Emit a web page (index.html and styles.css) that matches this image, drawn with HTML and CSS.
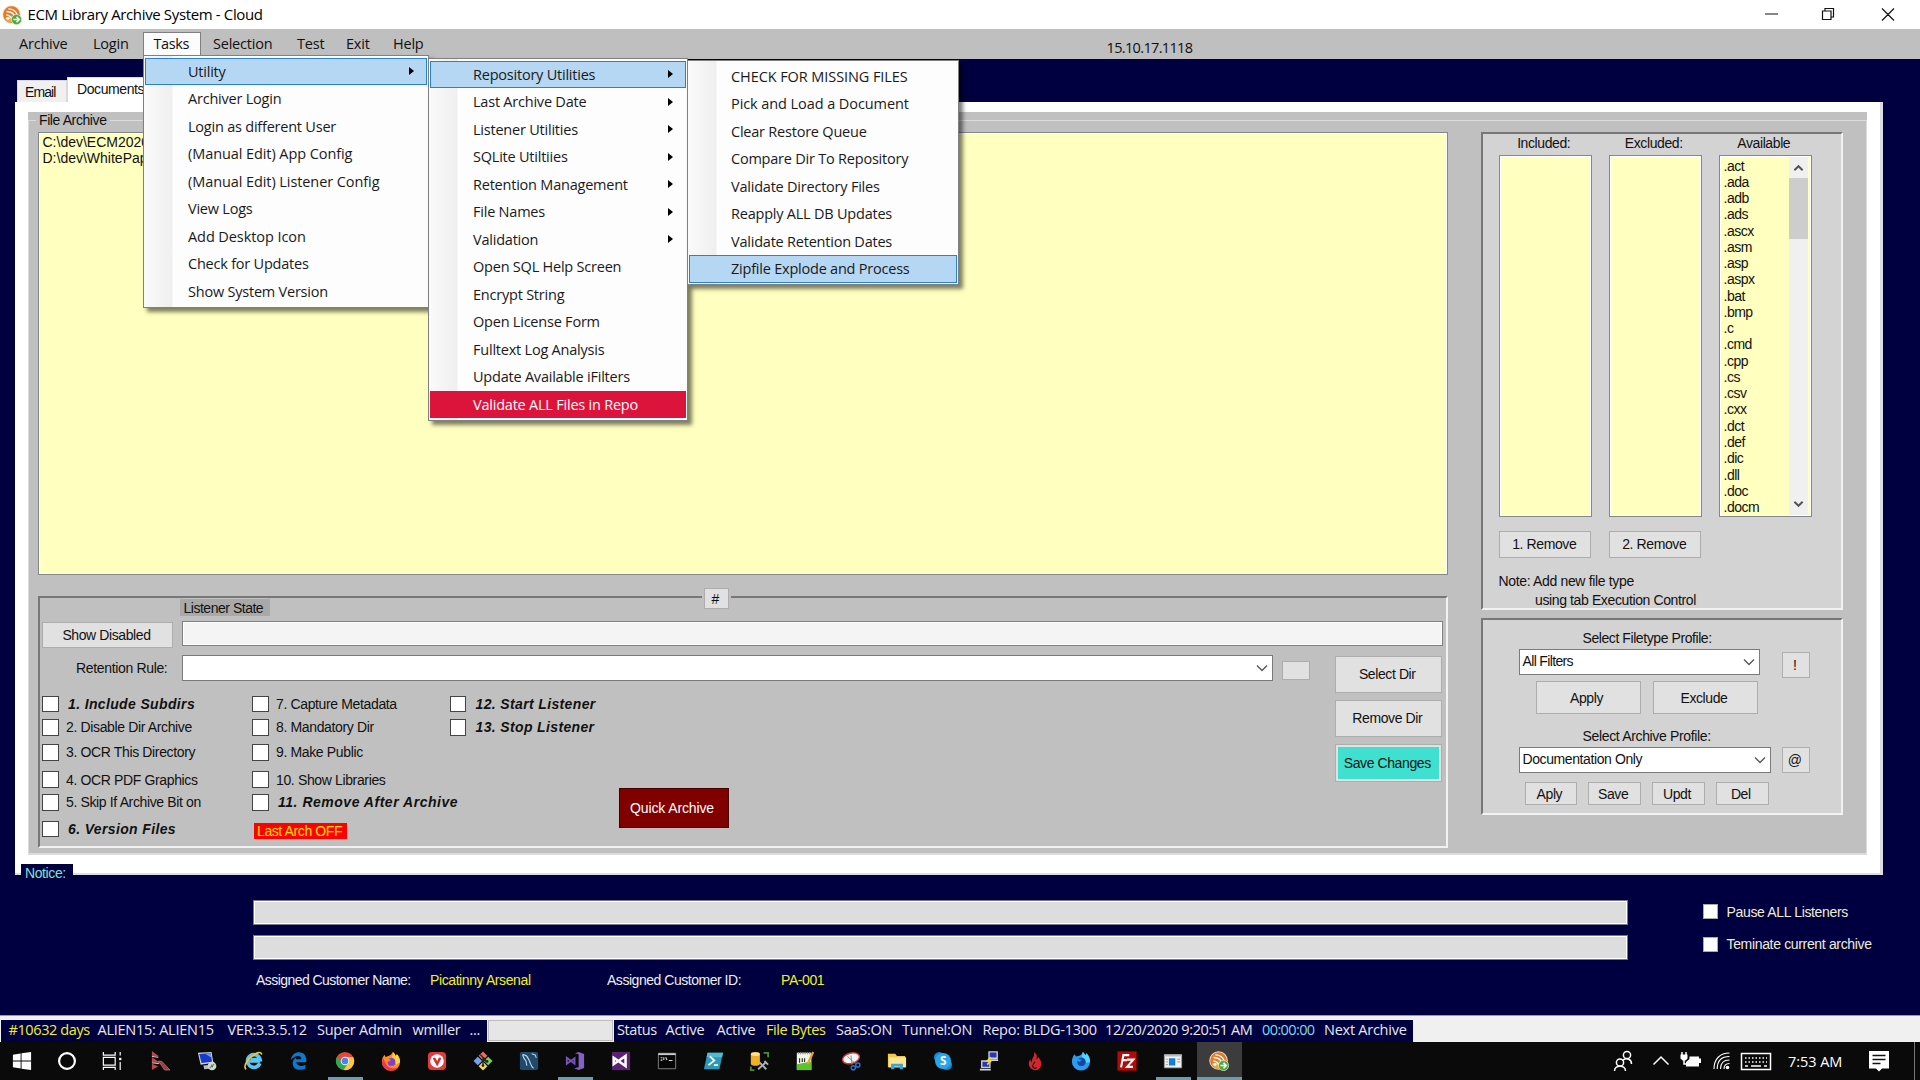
FILE: index.html
```html
<!DOCTYPE html>
<html lang="en">
<head>
<meta charset="utf-8">
<title>ECM Library Archive System - Cloud</title>
<link rel="stylesheet" href="styles.css">
</head>
<body>
<svg class="defs" width="0" height="0">
  <symbol id="ecm" viewBox="0 0 22 22">
    <circle cx="10.5" cy="10.5" r="10.2" fill="#f2ddc4"/><circle cx="10.5" cy="10.5" r="9.2" fill="#e07a2c"/>
    <path d="M3 14a8.600 8.600 0 0 0 8 5.700L13 11z" fill="#e8a83c"/>
    <path d="M5 7.200c5 0 9 3 10 8M4.600 10.800c3 .2 5.500 2 6.300 5M7 4.200c4.500 0 8.500 3 10 7" fill="none" stroke="#fff" stroke-width="1.500"/>
    <circle cx="6.500" cy="14.500" r="1.700" fill="#fff"/>
    <circle cx="16" cy="16" r="5.600" fill="#4ea83f" stroke="#d8efcf" stroke-width=".8"/>
    <path d="M12.500 16h6M16 13l3 3-3 3" fill="none" stroke="#fff" stroke-width="1.800"/>
  </symbol>
  <symbol id="down" viewBox="0 0 12 8"><path d="M1 1.500l5 5 5-5" fill="none" stroke="#555" stroke-width="1.300"/></symbol>
</svg>

<header class="titlebar">
  <svg class="app-icon"><use href="#ecm"/></svg>
  <span class="title">ECM Library Archive System - Cloud</span>
  <svg class="win-controls" viewBox="0 0 180 29">
    <g fill="none" stroke="#111" stroke-width="1.200">
      <path d="M25 14h13M82.500 11h8.500v8.500h-8.500zM85 11V8.500h8.500V17H91M142 8.500l12 12M154 8.500l-12 12"/>
    </g>
  </svg>
</header>

<nav class="menubar">
  <span class="mi" style="width:74px">Archive</span>
  <span class="mi" style="width:61px">Login</span>
  <span class="mi open" style="width:58px">Tasks</span>
  <span class="mi" style="width:84px">Selection</span>
  <span class="mi" style="width:49px">Test</span>
  <span class="mi" style="width:47px">Exit</span>
  <span class="mi" style="width:54px">Help</span>
  <span class="version">15.10.17.1118</span>
</nav>

<main class="client">
  <div class="tabs"><span class="tab">Email</span><span class="tab selected">Documents</span></div>
  <section class="page">
    <div class="page-body">
      <fieldset class="group">
        <legend>File Archive</legend>
        <div class="columns">
          <div class="col-left">
            <div class="listbox archive-list"><div>C:\dev\ECM2020</div><div>D:\dev\WhitePapers</div></div>
            <section class="panel settings">
              <button class="btn hash">#</button>
              <span class="state-label">Listener State</span>
              <div class="row-state"><button class="btn show">Show Disabled</button><div class="textbox"></div></div>
              <div class="lower">
                <div class="lower-main">
                  <div class="row-rule">
                    <span class="rule-label">Retention Rule:</span>
                    <div class="combo rule"><svg class="chev"><use href="#down"/></svg></div>
                    <button class="btn tiny"></button>
                  </div>
                  <div class="checks">
                    <label class="check c1 bi"><i></i>1. Include Subdirs</label>
                    <label class="check c2"><i></i>7. Capture Metadata</label>
                    <label class="check c3 bi"><i></i>12. Start Listener</label>
                    <label class="check c1"><i></i>2. Disable Dir Archive</label>
                    <label class="check c2"><i></i>8. Mandatory Dir</label>
                    <label class="check c3 bi"><i></i>13. Stop Listener</label>
                    <label class="check c1"><i></i>3. OCR This Directory</label>
                    <label class="check c2"><i></i>9. Make Public</label>
                    <label class="check c1"><i></i>4. OCR PDF Graphics</label>
                    <label class="check c2"><i></i>10. Show Libraries</label>
                    <label class="check c1"><i></i>5. Skip If Archive Bit on</label>
                    <label class="check c2 bi wide"><i></i>11. Remove After Archive</label>
                    <label class="check c1 bi last"><i></i>6. Version Files</label>
                    <span class="arch-off">Last Arch OFF</span>
                    <button class="quick">Quick Archive</button>
                  </div>
                </div>
                <div class="dir-buttons">
                  <button class="btn">Select Dir</button>
                  <button class="btn">Remove Dir</button>
                  <button class="btn save">Save Changes</button>
                </div>
              </div>
            </section>
          </div>
          <div class="col-right">
            <section class="panel light types">
              <div class="type-grid">
                <span class="head">Included:</span><span class="head">Excluded:</span><span class="head">Available</span>
                <div class="listbox"></div>
                <div class="listbox"></div>
                <div class="listbox ext">
                  <div class="ext-items"><div>.act</div><div>.ada</div><div>.adb</div><div>.ads</div><div>.ascx</div><div>.asm</div><div>.asp</div><div>.aspx</div><div>.bat</div><div>.bmp</div><div>.c</div><div>.cmd</div><div>.cpp</div><div>.cs</div><div>.csv</div><div>.cxx</div><div>.dct</div><div>.def</div><div>.dic</div><div>.dll</div><div>.doc</div><div>.docm</div></div>
                  <div class="scroll">
                    <svg viewBox="0 0 12 8"><path d="M1.500 6.500l4.500-4.500 4.500 4.500" fill="none" stroke="#555" stroke-width="2.200"/></svg>
                    <div class="thumb"></div>
                    <svg viewBox="0 0 12 8"><path d="M1.500 1.500l4.500 4.500 4.500-4.500" fill="none" stroke="#555" stroke-width="2.200"/></svg>
                  </div>
                </div>
                <button class="btn rem">1. Remove</button><button class="btn rem">2. Remove</button>
              </div>
              <div class="note">Note: Add new file type</div>
              <div class="note second">using tab Execution Control</div>
            </section>
            <section class="panel light profiles">
              <div class="plabel">Select Filetype Profile:</div>
              <div class="prow"><div class="combo ft">All Filters<svg class="chev"><use href="#down"/></svg></div><button class="btn sq low">!</button></div>
              <div class="apply-row"><button class="btn">Apply</button><button class="btn">Exclude</button></div>
              <div class="plabel second">Select Archive Profile:</div>
              <div class="prow"><div class="combo ap">Documentation Only<svg class="chev"><use href="#down"/></svg></div><button class="btn sq">@</button></div>
              <div class="small-row"><button class="btn">Aply</button><button class="btn">Save</button><button class="btn">Updt</button><button class="btn">Del</button></div>
            </section>
          </div>
        </div>
      </fieldset>
    </div>
  </section>
  <div class="notice">Notice:</div>
  <section class="bottom">
    <div class="bars">
      <div class="bar"></div><div class="bar"></div>
      <div class="customer"><span class="cn">Assigned Customer Name:</span><span class="y cv">Picatinny Arsenal</span><span class="ci">Assigned Customer ID:</span><span class="y">PA-001</span></div>
    </div>
    <div class="flags">
      <label class="flag"><i></i>Pause ALL Listeners</label>
      <label class="flag"><i></i>Teminate current archive</label>
    </div>
  </section>
</main>

<div class="statusbar">
  <div class="st left"><span class="y" style="width:89px">#10632 days</span><span style="width:130px">ALIEN15: ALIEN15</span><span style="width:89.500px">VER:3.3.5.12</span><span style="width:95.500px">Super Admin</span><span style="width:57px">wmiller</span><span>...</span></div>
  <div class="st-progress"></div>
  <div class="st right"><span class="tight" style="width:48.500px">Status</span><span style="width:51px">Active</span><span style="width:49.500px">Active</span><span class="y" style="width:70px">File Bytes</span><span style="width:66px">SaaS:ON</span><span style="width:80.500px">Tunnel:ON</span><span style="width:122.500px">Repo: BLDG-1300</span><span class="tight" style="width:157px">12/20/2020 9:20:51 AM</span><span class="aqua" style="width:62px">00:00:00</span><span>Next Archive</span></div>
</div>

<footer class="taskbar">
  <div class="sys"><svg viewBox="0 0 22 22"><path d="M1 4l8.500-1.200v7.700H1zM10.500 2.600L21 1v9.500H10.500zM1 11.500h8.500v7.700L1 18zM10.500 11.500H21V21l-10.500-1.600z" fill="#fff"/></svg></div>
  <div class="sys"><svg viewBox="0 0 22 22"><circle cx="11" cy="11" r="8.700" fill="none" stroke="#fff" stroke-width="2.400"/></svg></div>
  <div class="sys"><svg viewBox="0 0 22 22"><path d="M1.500 1v3.500h13V1M1.500 7h13v8.500h-13zM1.500 21v-3h13v3M20 1v4M20 12v9" fill="none" stroke="#fff" stroke-width="1.300"/><path d="M18.800 7.500h2.500v2.600h-2.500z" fill="#fff"/></svg></div>
  <div class="apps">
    <div class="app"><svg viewBox="0 0 22 22"><path d="M1 0l8 6H1zM1 7l9 6H1zM1 14l7 3-7 4z" fill="#b9474b"/><path d="M8 11l4 .5 9 9.500h-6z" fill="#a33b40" stroke="#c9a0a0" stroke-width=".6"/><path d="M1 6l7 1M1 13l8 1" stroke="#ddd"/></svg></div>
    <div class="app"><svg viewBox="0 0 22 22"><path d="M1 2l15-1 2 12-14 2z" fill="#cfd6dc"/><path d="M2.500 3.200l12.500-.9 1.600 9.500-11.600 1.500z" fill="#1838c8"/><path d="M9 3l6-.5.9 5z" fill="#6c9bf0"/><path d="M7 16l9-1 1 4-9 1z" fill="#b8bfc5"/><circle cx="16.500" cy="16.500" r="4.800" fill="#d3d8d4"/><path d="M14 18.500l2-1.500 0-2M19 14.500l-2 1.500v2" fill="none" stroke="#4b8b3b" stroke-width="1.200"/></svg></div>
    <div class="app"><svg viewBox="0 0 22 22"><path d="M18.500 13.500a7 7 0 1 1 .3-4H8" fill="none" stroke="#5cc3f2" stroke-width="4"/><path d="M5 11.500h14" stroke="#5cc3f2" stroke-width="3"/><path d="M3.500 20C0 18 4 10 10 5.500S20 .5 20.500 4" fill="none" stroke="#f0c437" stroke-width="1.800"/></svg></div>
    <div class="app"><svg viewBox="0 0 22 22"><path d="M2 10C3 4 7 1.500 11 1.500c5.500 0 8 4 8 8.500v2.500H8c.3 4 5.500 5 10 2.500v4.200c-6 3.300-14 1.300-14-5.700 0-3.500 2-5.700 4.200-6.700-.5 1-.6 1.700-.6 2.200h6C13.500 4 6.500 4.500 2 10z" fill="#0b79d0"/></svg></div>
    <div class="app run"><svg viewBox="0 0 22 22"><circle cx="11" cy="11" r="10" fill="#e8473b"/><path d="M2.300 6A10 10 0 0 0 9.500 20.900l4.500-7.600-6.500-.5z" fill="#2da94f"/><path d="M11 6.500h9A10 10 0 0 1 9.500 20.900L14.800 13z" fill="#fcc934"/><circle cx="11" cy="11" r="4.700" fill="#fff"/><circle cx="11" cy="11" r="3.700" fill="#4285f4"/></svg></div>
    <div class="app"><svg viewBox="0 0 22 22"><path d="M13 1c2 1.500 2.500 3 3 4.500l1.500-2C20 6 21 9 21 12a10 9.700 0 0 1-20 0c0-4 1.500-6.500 3-8l1 2.500C8 5.500 11 5 13 1z" fill="#ff8a26"/><path d="M13 1c2 1.500 2.500 3 3 4.500l1.500-2C20 6 21 9 21 12l-4 3-5-9c1-1.500 1.500-3.500 1-5z" fill="#ffd43a"/><path d="M1 12a10 9.700 0 0 0 18 5.500C14 21 5 19 3 8z" fill="#f5334f"/><circle cx="11.500" cy="12" r="4.300" fill="#7b3fd4"/><path d="M5 8l6 1.500-2 2H6z" fill="#ff8a26"/></svg></div>
    <div class="app"><svg viewBox="0 0 22 22"><rect x="1" y="1" width="20" height="20" rx="4.500" fill="#e33b3b"/><circle cx="11" cy="11" r="7.500" fill="#fff"/><path d="M8 8.500l3.200 5.500L14 8.500" fill="none" stroke="#d8302f" stroke-width="2.800" stroke-linecap="round"/></svg></div>
    <div class="app"><svg viewBox="0 0 22 22"><path d="M11 .5l4.800 4.800-4.800 4.800-4.800-4.800z" fill="#ec6b5e"/><path d="M5.300 6.200l4.800 4.800-4.800 4.800L.5 11z" fill="#6fa3ea"/><path d="M16.700 6.200l4.800 4.800-4.800 4.800-4.800-4.800z" fill="#7fd05b"/><path d="M11 11.900l4.800 4.800-4.800 4.800-4.800-4.800z" fill="#f3d862"/><path d="M8 4l6 6M11 7v9M11 8l4 4" stroke="#222" stroke-width="1.500"/><circle cx="11" cy="16" r="1.500" fill="#222"/><circle cx="15.500" cy="11.500" r="1.500" fill="#222"/></svg></div>
    <div class="app"><svg viewBox="0 0 22 22"><rect x="1" y="1" width="20" height="20" rx="2" fill="#1f4a6b"/><path d="M4 4c4 0 5 2 7 6s2 7 5 9M4 4c1 3 1 4 3 6s0 4 2 6M14 3l4 1.500 1 3" fill="none" stroke="#c9dbe8" stroke-width="1.200"/></svg></div>
    <div class="app run"><svg viewBox="0 0 22 22"><path d="M15 1l6 2.300v15.400L15 21l-5-2 5-1V3.500l-4-1z" fill="#8661c5"/><path d="M2 7.500L10.500 14V8L2 14z" fill="none" stroke="#7b53bd" stroke-width="2"/></svg></div>
    <div class="app"><svg viewBox="0 0 22 22"><path d="M1 1h20v20H1z" fill="#5c2171"/><path d="M3 7.500L16 16.500V5.500L3 14.500z" fill="none" stroke="#fff" stroke-width="2.800"/></svg></div>
    <div class="app"><svg viewBox="0 0 22 22"><path d="M1.500 2.500h19v17h-19z" fill="#050505" stroke="#888"/><path d="M1.500 3.500h19" stroke="#ccc" stroke-width="2"/><path d="M4 7.500h2M4 10h2M7.500 7v3M9.500 7l1.500 3M13 10.500h4" stroke="#ddd" stroke-width="1.200"/></svg></div>
    <div class="app"><svg viewBox="0 0 22 22"><path d="M5 2h17l-4 18H1z" fill="#2b9ab8"/><path d="M5 2h17l-1 5H4z" fill="#54bad2"/><path d="M7.500 6l5 4.500-6.500 5M12 15.500h4.500" fill="none" stroke="#fff" stroke-width="1.900"/></svg></div>
    <div class="app"><svg viewBox="0 0 22 22"><path d="M2 3v11c0 3 10 3 10 0V3z" fill="#f0b01f"/><ellipse cx="7" cy="3.200" rx="5" ry="2.200" fill="#ffe08a"/><path d="M16 2h5v5M2 17v4h4" fill="none" stroke="#4a8a3f" stroke-width="2"/><path d="M10 20l8-7M11 12l8 8" stroke="#aab0b3" stroke-width="2.200"/><path d="M17 11l4 4" stroke="#aab0b3" stroke-width="2"/></svg></div>
    <div class="app"><svg viewBox="0 0 22 22"><path d="M2 2h16v19H2z" fill="#f1f5e8"/><path d="M2 14.500l16-3V21H2z" fill="#5fc12e"/><path d="M3 2.500h14" stroke="#999" stroke-width="2" stroke-dasharray="1.500 1"/><path d="M5 13V8M8 8v4M10.500 8v4" stroke="#333" fill="none" stroke-width="1.300"/><path d="M20 1l-6 13" stroke="#e5a52a" stroke-width="2.500"/></svg></div>
    <div class="app"><svg viewBox="0 0 22 22"><ellipse cx="11" cy="8" rx="9.500" ry="5.800" transform="rotate(-15 11 8)" fill="#f4f4f4" stroke="#c43a3a" stroke-width="1.600"/><path d="M7 6l9 8M11 5l1 10" stroke="#888"/><circle cx="18.500" cy="15.500" r="2.300" fill="none" stroke="#2c6fd1" stroke-width="1.600"/><circle cx="13.500" cy="18.500" r="2.300" fill="none" stroke="#2c6fd1" stroke-width="1.600"/></svg></div>
    <div class="app"><svg viewBox="0 0 22 22"><path d="M1 3h8l2 2.500h9V18H1z" fill="#f3c64c"/><path d="M2 7h19v11H2z" fill="#ffe594"/><path d="M4.500 20v-6h13v6h-3.500v-3H8v3z" fill="#37a6dc"/></svg></div>
    <div class="app"><svg viewBox="0 0 22 22"><circle cx="7" cy="7" r="6" fill="#1785cf"/><circle cx="15" cy="15" r="6" fill="#1785cf"/><circle cx="11" cy="11" r="8.800" fill="#2aa5ea"/><text x="11" y="15.800" class="skype">S</text></svg></div>
    <div class="app"><svg viewBox="0 0 22 22"><path d="M11 1h9v7h-9zM3 11h9v7H3z" fill="#2a35b8" stroke="#cfd0d6" stroke-width="1.500"/><path d="M10 10h11M1 20.500h12" stroke="#d6d6d6" stroke-width="2"/><path d="M13 7l-4 4h4l-4 4" fill="none" stroke="#f5e11b" stroke-width="1.700"/></svg></div>
    <div class="app"><svg viewBox="0 0 22 22"><path d="M10 1c5 4 2 6 3 8 1.500-1 1-2 1-3 5 5 5 11 1 14-2 1.500-5 1.500-7 0C3 17 3.500 12 6 9c0 2 .5 3 1.500 3.500C7 8 11 6 10 1z" fill="#d3262c"/><path d="M11 12c-3 3-3 4-2 6 1 1 3 1 4 0" fill="none" stroke="#111" stroke-width="1.300"/></svg></div>
    <div class="app"><svg viewBox="0 0 22 22"><path d="M13 1c1.500 1 2.200 2.500 2.700 4L17 2.500C20 5 21 9 21 12a10 9.500 0 0 1-20 0c0-4 1.500-7 3-8.500L5.500 6C9 5.500 12 4.500 13 1z" fill="#2b9cf0"/><path d="M13 1c1.500 1 2.200 2.500 2.700 4L17 2.500C20 5 21 9 21 12l-4 1-5-7z" fill="#52d5fb"/><circle cx="11.500" cy="12" r="4.500" fill="#18469c"/><path d="M4 8l8 1.500-3 2.500z" fill="#2b9cf0"/></svg></div>
    <div class="app"><svg viewBox="0 0 22 22"><path d="M.5 .5h21v21H.5z" fill="#b30a0a" stroke="#7c0505" stroke-dasharray="1.500 1"/><path d="M4.500 18L7 4.500h6.500M6 10h5M11 9.500h7l-7 8h6.500" fill="none" stroke="#fff" stroke-width="2.300"/></svg></div>
    <div class="app run"><svg viewBox="0 0 22 22"><path d="M1.500 4h19v14.500h-19z" fill="#f2f2f2" stroke="#9a9a9a"/><path d="M1.500 5h19" stroke="#bbb" stroke-width="2"/><path d="M6.500 8h7v8h-7z" fill="#1280d8"/><path d="M3 9h2.500M3 12h2.500M3 15h2.500M15.500 9H19M15.500 12H19" stroke="#999"/></svg></div>
    <div class="app active"><svg><use href="#ecm"/></svg></div>
  </div>
  <svg class="tray" viewBox="0 0 310 38" width="310" height="38">
    <g fill="none" stroke="#fff" stroke-width="1.500">
      <circle cx="17" cy="13" r="3.600"/><circle cx="10" cy="20.500" r="3.600"/>
      <path d="M4.500 29c0-6.500 11-6.500 11 0M13 18c4-2.500 8.500-1 8.500 4"/>
      <path d="M43.500 22.500l7.500-7.500 7.500 7.500"/>
      <path d="M114 27c0-3.500 2-5.500 5.500-5.500M110.500 27c0-6 3.500-9 9-9M107.200 27c0-8 4.500-12.500 12.300-12.500M104 27c0-10 6-16 15.500-16" stroke-width="1.100"/>
      <rect x="131.500" y="11.500" width="29" height="16"/>
      <path d="M135 16h22M135 20h22" stroke-dasharray="1.500 2"/><path d="M135 24h3M141 24h10M154 24h3"/>
      <path d="M72 10v3M76 10v3"/><path d="M74 18v4h3"/>
    </g>
    <path d="M70.500 12.500h7v4l-2 2h-3l-2-2zM79.500 14.500h9.500v2h2v4.500h-2v3.500H76v-4.500l3.500-3z" fill="#fff"/>
    <circle cx="117.500" cy="25.500" r="1.800" fill="#fff"/>
    <path d="M259 9h20v17.500h-7l-3 3-3-3h-7z" fill="#fff"/>
    <path d="M262.500 13.500h13M262.500 17.500h13M262.500 21.500h8" stroke="#111" stroke-width="1.300"/>
    <path d="M304.500 0v38" stroke="#777"/>
    <text x="178" y="24.500" class="clock" textLength="54">7:53 AM</text>
  </svg>
</footer>

<div class="menu m1">
  <div class="item hot sub">Utility</div><div class="item">Archiver Login</div><div class="item">Login as different User</div><div class="item loose">(Manual Edit) App Config</div><div class="item loose">(Manual Edit) Listener Config</div><div class="item">View Logs</div><div class="item loose">Add Desktop Icon</div><div class="item">Check for Updates</div><div class="item">Show System Version</div>
</div>
<div class="menu m2">
  <div class="item hot sub">Repository Utilities</div><div class="item sub">Last Archive Date</div><div class="item sub">Listener Utilities</div><div class="item sub">SQLite Utiltiies</div><div class="item sub">Retention Management</div><div class="item sub">File Names</div><div class="item sub">Validation</div><div class="item">Open SQL Help Screen</div><div class="item">Encrypt String</div><div class="item">Open License Form</div><div class="item">Fulltext Log Analysis</div><div class="item">Update Available iFilters</div><div class="item danger">Validate ALL Files in Repo</div>
</div>
<div class="menu m3">
  <div class="item loose">CHECK FOR MISSING FILES</div><div class="item loose">Pick and Load a Document</div><div class="item">Clear Restore Queue</div><div class="item">Compare Dir To Repository</div><div class="item">Validate Directory Files</div><div class="item">Reapply ALL DB Updates</div><div class="item">Validate Retention Dates</div><div class="item hot">Zipfile Explode and Process</div>
</div>
</body>
</html>
```
FILE: styles.css
```css
* { box-sizing: border-box; }
body {
  margin: 0; width: 1920px; height: 1080px; overflow: hidden; position: relative;
  display: flex; flex-direction: column; background: #000040; color: #111;
  font: 14px/16px "Liberation Sans", Arial, sans-serif; letter-spacing: -0.4px; white-space: nowrap;
}
.defs { position: absolute; }
button { font: inherit; letter-spacing: inherit; color: inherit; padding: 0; margin: 0; }

/* title bar and menu bar */
.titlebar, .menubar, .menu, .st { font-family: "Open Sans", sans-serif; font-size: 14.5px; letter-spacing: -0.22px; }
.titlebar { height: 29px; background: #fff; display: flex; align-items: center; color: #000; flex: none; }
.app-icon { width: 20px; height: 20px; margin-left: 2px; }
.title { margin-left: 5.500px; font-size: 15px; letter-spacing: -0.36px; padding-bottom: 2px; }
.win-controls { width: 180px; height: 29px; margin-left: auto; }
.menubar { height: 30px; background: #bfbfbf; display: flex; align-items: flex-end; padding: 0 0 3px 8px; flex: none; }
.mi { height: 24px; line-height: 23px; padding-left: 11px; }
.mi.open { background: #fcfcfc; border: 1px solid #808080; border-bottom: 0; padding-left: 9.500px; margin-right: 1px; letter-spacing: -0.4px; line-height: 22px; }
.version { margin-left: 670.500px; line-height: 16px; letter-spacing: -0.65px; }

/* tabbed page */
.client { flex: none; height: 956px; }
.tabs { padding: 18px 0 0 17px; display: flex; align-items: flex-end; height: 43px; }
.tab { background: #f0f0f0; width: 50px; height: 22px; padding: 3px 0 0 7px; letter-spacing: -0.9px; border: 1px solid #d9d9d9; border-bottom: 0; }
.tab.selected { background: #fff; width: 100px; height: 25px; padding-left: 9px; letter-spacing: -0.4px; }
.page { margin-left: 15px; width: 1868px; height: 773px; background: #fff; border-right: 3px solid #dcdce4; border-bottom: 2px solid #dcdce4; padding: 10px 0 0 13px; }
.page-body { width: 1839px; height: 743px; background: #c0c0c0; }
.group { margin: 0; padding: 4px 0 0 9px; height: 743px; border: 1px solid #dcdcdc; border-bottom-width: 2px; min-width: 0; }
legend { height: 16px; line-height: 17px; padding: 0 3px; margin-left: -2px; }
.columns { display: flex; gap: 32.500px; margin-left: -0.500px; }
.col-left { width: 1410.500px; }
.col-right { width: 362.500px; }
.listbox { background: #ffffbf; border: 1px solid #828790; outline: 1px solid #fff; outline-offset: -2px; }
.archive-list { height: 443px; padding: 1px 0 0 4px; line-height: 16.200px; letter-spacing: 0; }
.panel { border: 2px solid; border-color: #777 #f2f2f2 #f2f2f2 #777; }
.light { background: #d3d3d3; }
.btn { background: #e1e1e1; border: 1.500px solid #adadad; border-radius: 0; display: flex; align-items: center; justify-content: center; padding-right: 1.500px; }
.textbox { background: #f4f4f4; border: 1px solid #808080; box-shadow: inset 0 0 0 1px #fff; height: 25px; width: 1261px; }
.combo { background: #fff; border: 1px solid #7a7a7a; height: 26px; display: flex; align-items: center; padding: 0 4px 2px 3px; }
.chev { width: 12px; height: 8px; margin-left: auto; position: relative; top: 1px; }

/* archive settings panel */
.settings { position: relative; margin-top: 21px; height: 251.500px; }
.hash { position: absolute; left: 664px; top: -10px; width: 25px; height: 21px; box-shadow: -2px 0 #c0c0c0, 2px 0 #c0c0c0; }
.state-label { display: block; margin: 1px 0 0 140.500px; width: 90px; height: 16.500px; line-height: 18px; background: #a9a9a9; padding-left: 3.500px; letter-spacing: -0.48px; }
.row-state { display: flex; gap: 9px; margin: 5px 0 0 2px; height: 27px; }
.show { width: 131.500px; height: 26px; margin-top: 1px; }
.lower { display: flex; padding-top: 7px; }
.lower-main { width: 1295.500px; }
.row-rule { display: flex; }
.rule-label { width: 142.500px; padding: 5px 0 0 36.500px; letter-spacing: -0.34px; }
.rule { width: 1091px; }
.tiny { width: 28px; height: 19px; margin: 6px 0 0 9px; }
.checks { display: grid; grid-template-columns: 210px 197.500px 169px 120px; grid-template-rows: 23.500px 23.700px 26.200px 28.600px 16.600px 27px; margin: 11.500px 0 0 2.500px; align-items: center; }
.check { display: flex; align-items: center; height: 17px; letter-spacing: -0.36px; }
.check i { width: 16.500px; height: 16.500px; background: #fff; border: 1px solid #444; margin-right: 7.500px; flex: none; }
.check.bi { font-weight: bold; font-style: italic; letter-spacing: 0.360px; }
.check.bi i { margin-right: 9.500px; }
.check.wide { letter-spacing: 0.520px; }
.c1 { grid-column: 1; }
.c2 { grid-column: 2; }
.c3 { grid-column: 3; }
.last { align-self: end; }
.arch-off { grid-column: 2; grid-row: 6; align-self: end; margin: 0 0 -1.500px 1.500px; width: 93.500px; height: 16px; line-height: 17px; padding-left: 3.500px; background: #f00; color: #ffe100; }
.quick { grid-column: 4; grid-row: 4 / 7; align-self: start; margin: 22.500px 0 -10px; width: 110px; height: 40px; background: #800000; color: #fff; border: 1px solid #400; letter-spacing: -0.12px; padding-right: 3px; }
.dir-buttons { display: flex; flex-direction: column; gap: 7px; padding-top: 1px; }
.dir-buttons .btn { width: 107px; height: 37px; padding-right: 2.500px; }
.dir-buttons .save { background: #40e0d0; box-shadow: inset 0 0 0 2px #e1e1e1; height: 38px; }

/* file types */
.types { height: 478px; padding: 0 0 0 16px; }
.type-grid { display: grid; grid-template-columns: repeat(3, 93.500px); column-gap: 16.500px; grid-template-rows: 20.500px 362px 41px; }
.head { text-align: center; padding: 1px 3px 0 0; }
.ext { display: flex; overflow: hidden; }
.ext-items { flex: 1; padding: 2px 0 0 4px; line-height: 16.260px; letter-spacing: -0.5px; }
.scroll { width: 19px; margin: 1px 3px 1px 0; background: #f0f0f0; display: flex; flex-direction: column; align-items: center; padding: 7px 0; }
.scroll svg { width: 11px; height: 8px; flex: none; }
.scroll svg:last-child { margin-top: auto; }
.thumb { width: 19px; height: 61px; background: #cdcdcd; margin-top: 6px; }
.rem { height: 27px; align-self: end; width: 92px; margin-left: 0.500px; }
.note { margin-top: 15px; letter-spacing: -0.34px; }
.second.note { margin: 3px 0 0 36.500px; letter-spacing: -0.38px; }

/* profiles */
.profiles { margin-top: 8px; height: 197px; padding: 10px 0 0 36px; }
.plabel { padding-left: 64px; letter-spacing: -0.420px; }
.prow { display: flex; margin-top: 3px; justify-content: space-between; padding-right: 31.500px; height: 26px; }
.ft { width: 241px; letter-spacing: -0.65px; }
.ap { width: 252px; }
.sq { width: 28px; height: 26px; }
.low { margin-top: 3px; }
.apply-row { display: flex; gap: 12.500px; margin: 6px 0 0 17px; }
.apply-row .btn { width: 105px; height: 33px; padding-right: 3px; }
.plabel.second { margin-top: 13.500px; letter-spacing: -0.340px; }
.small-row { display: flex; gap: 11px; margin: 9.500px 0 0 6px; }
.small-row .btn { width: 52.800px; height: 23px; padding-right: 3px; }

/* notice, progress, flags */
.notice { margin: -11px 0 0 21px; width: 51.500px; height: 16px; line-height: 18px; padding-left: 4px; background: #000040; color: #7fe0d4; position: relative; }
.bottom { display: flex; padding: 20px 0 0 252.500px; }
.bars { width: 1375px; }
.bar { height: 25px; background: #ddd; border: 1px solid #77778c; box-shadow: inset 0 0 0 1px #fff; margin-bottom: 10px; }
.customer { display: flex; color: #eee; padding: 2px 0 0 3.500px; }
.cn { width: 174px; letter-spacing: -0.550px; }
.cv { width: 177px; }
.ci { width: 174px; letter-spacing: -0.470px; }
.y { color: #f0f020; }
.flags { padding: 3.500px 0 0 75px; color: #f0ecd2; }
.flag { display: flex; align-items: center; height: 16px; margin-bottom: 16.500px; letter-spacing: -0.34px; }
.flag i { width: 15px; height: 15px; background: #fff; border: 1px solid #aaa; margin-right: 9px; }

/* status strip */
.statusbar { height: 27px; background: #f0f0f0; border-top: 1px solid #99a; flex: none; display: flex; align-items: flex-start; padding: 4px 0 0 1px; }
.st { display: flex; height: 22px; background: #000040; color: #e8e8e8; line-height: 20.500px; letter-spacing: -0.25px; }
.st span { flex: none; }
.st.left { width: 485.500px; padding-left: 7.500px; }
.st.right { width: 799px; padding-left: 3.500px; }
.st-progress { width: 125px; height: 21px; margin: 0 1px; background: #e6e6e6; border: 1px solid #bcbcbc; }
.st .aqua { color: #7fdbe6; letter-spacing: -0.6px; }
.st .y, .st .tight { letter-spacing: -0.4px; }

/* taskbar */
.taskbar { height: 38px; background: #0a0a0a; display: flex; flex: none; }
.sys { width: 44.700px; display: flex; align-items: center; justify-content: center; }
.taskbar .sys svg, .app svg { width: 20px; height: 20px; }
.apps { display: flex; margin-left: 4px; }
.app { width: 46px; display: flex; align-items: center; justify-content: center; }
.run { background: linear-gradient(#6a9db3, #6a9db3) center bottom / 35px 3px no-repeat; }
.active { background: linear-gradient(#6a9db3, #6a9db3) center bottom / 45px 3px no-repeat, linear-gradient(#3c3c3c, #3c3c3c) center / 45px 100% no-repeat; }
.skype { font: bold 13px "Open Sans", sans-serif; fill: #fff; text-anchor: middle; }
.tray { margin-left: auto; }
.clock { font: 14.500px "Open Sans", sans-serif; fill: #fff; }

/* drop-down menus */
.menu { position: absolute; background: linear-gradient(90deg, #fafafa, #efefef 28px, #fdfdfd 29px); border: 1px solid #808080; box-shadow: 4px 4px 4px rgba(0, 0, 0, .5); padding: 1.500px 1px; color: #1a1a1a; }
.item { height: 27.500px; line-height: 25px; padding-left: 42px; border: 1px solid transparent; position: relative; }
.loose { letter-spacing: -0.08px; }
.hot { background: #b5d7f3; border-color: #2a82cf; }
.danger { background: #dc143c; color: #fff; }
.sub::after { content: ""; position: absolute; right: 12px; top: 8.500px; border: 4.500px solid transparent; border-left: 5px solid #000; border-right: 0; }
.m1 { left: 143px; top: 55px; width: 286px; height: 252.500px; }
.m2 { left: 428px; top: 58px; width: 259.500px; height: 362.500px; }
.m3 { left: 687px; top: 60px; width: 271.500px; height: 224.500px; }
.m3 .item { padding-left: 41px; }
```
